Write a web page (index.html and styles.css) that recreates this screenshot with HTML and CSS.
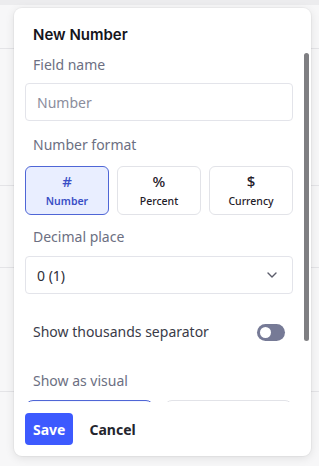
FILE: index.html
```html
<!DOCTYPE html>
<html>
<head>
<meta charset="utf-8">
<link rel="stylesheet" href="styles.css">
</head>
<body>
<div class="card">
  <div class="card-head">
    <h2 class="title">New Number</h2>
  </div>
  <div class="card-body">
    <div class="scroll">
      <div class="label label-first">Field name</div>
      <div class="input"><span class="placeholder">Number</span></div>

      <div class="label label-format">Number format</div>
      <div class="formats">
        <div class="fmt fmt-active">
          <span class="fmt-icon">#</span>
          <span class="fmt-label">Number</span>
        </div>
        <div class="fmt">
          <span class="fmt-icon">%</span>
          <span class="fmt-label">Percent</span>
        </div>
        <div class="fmt">
          <span class="fmt-icon">$</span>
          <span class="fmt-label">Currency</span>
        </div>
      </div>

      <div class="label label-decimal">Decimal place</div>
      <div class="select">
        <span class="select-value">0 (1)</span>
        <svg class="chevron" width="10" height="6" viewBox="0 0 10 6"><path d="M1 1l4 4 4-4" fill="none" stroke="#5b5d6b" stroke-width="1.4" stroke-linecap="round" stroke-linejoin="round"/></svg>
      </div>

      <div class="switch-row">
        <span class="switch-text">Show thousands separator</span>
        <span class="toggle"><span class="knob"></span></span>
      </div>

      <div class="label label-visual">Show as visual</div>
      <div class="visuals">
        <div class="visual visual-active"></div>
        <div class="visual"></div>
      </div>
    </div>
    <div class="scrollbar"></div>
  </div>
  <div class="card-foot">
    <button class="btn-save">Save</button>
    <button class="btn-cancel">Cancel</button>
  </div>
</div>
</body>
</html>
```

FILE: styles.css
```css
html, body {
  height: 100%;
}
body {
  margin: 0;
  padding: 8px 8px 0 14px;
  box-sizing: border-box;
  font-family: "Noto Sans", "Open Sans", sans-serif;
  background:
    linear-gradient(#ececee, #ececee) 0 0 / 100% 5px no-repeat,
    linear-gradient(#e4e4e7, #e4e4e7) 0 48px / 100% 1px no-repeat,
    linear-gradient(#e4e4e7, #e4e4e7) 0 185px / 100% 1px no-repeat,
    linear-gradient(#e4e4e7, #e4e4e7) 0 267px / 100% 1px no-repeat,
    linear-gradient(#e4e4e7, #e4e4e7) 0 391px / 100% 1px no-repeat,
    #f7f7f8;
}
.card {
  width: 297px;
  height: 448px;
  background: #fff;
  border-radius: 8px;
  box-shadow: 0 2px 10px rgba(0, 0, 0, 0.10), 0 0 0 1px rgba(0, 0, 0, 0.03);
  display: flex;
  flex-direction: column;
  overflow: hidden;
}
.card-head {
  padding: 17px 19px 3px;
}
.title {
  margin: 0;
  font-family: Inter, "Noto Sans", sans-serif;
  font-size: 15px;
  font-weight: 600;
  line-height: 20px;
  color: #15151c;
}
.card-body {
  position: relative;
  height: 354px;
  overflow: hidden;
}
.scroll {
  padding: 7px 18px 0 11px;
  display: flex;
  flex-direction: column;
}
.label {
  padding-left: 8px;
  font-size: 14px;
  line-height: 20px;
  color: #6c6f82;
}
.label-format { margin-top: 14px; }
.label-decimal { margin-top: 12px; }
.label-visual { margin-top: 29px; }
.input, .select {
  box-sizing: border-box;
  height: 38px;
  border: 1px solid #e3e4ea;
  border-radius: 4px;
  display: flex;
  align-items: center;
  padding: 0 15px 0 11px;
  font-size: 14px;
}
.input { margin-top: 8px; }
.placeholder { color: #8b8d9c; }
.select {
  margin-top: 9px;
  justify-content: space-between;
}
.select-value { color: #2d2e38; }
.formats {
  margin-top: 11px;
  display: grid;
  grid-template-columns: repeat(3, 1fr);
  gap: 8px;
}
.fmt {
  box-sizing: border-box;
  height: 49px;
  border: 1px solid #e2e3e8;
  border-radius: 6px;
  padding: 5px 0 6px;
  display: flex;
  flex-direction: column;
  align-items: center;
  color: #1f2029;
}
.fmt-active {
  background: #e9eeff;
  border-color: #4f66d6;
  color: #3a4fc6;
}
.fmt-icon {
  font-size: 15px;
  font-weight: 500;
  line-height: 18px;
}
.fmt-label {
  margin-top: 4px;
  font-size: 10.5px;
  font-weight: 500;
  line-height: 14px;
}
.fmt-active .fmt-label { font-weight: 600; }
.switch-row {
  margin-top: 28px;
  padding: 0 8px;
  display: flex;
  align-items: center;
  justify-content: space-between;
  height: 20px;
}
.switch-text {
  font-size: 14px;
  line-height: 20px;
  color: #3a3b48;
}
.toggle {
  width: 28px;
  height: 17px;
  border-radius: 9px;
  background: #767a96;
  display: flex;
  align-items: center;
  padding-left: 3px;
  box-sizing: border-box;
}
.knob {
  width: 11px;
  height: 11px;
  border-radius: 50%;
  background: #fff;
}
.visuals {
  margin-top: 9px;
  display: grid;
  grid-template-columns: 1fr 1fr;
  gap: 10px;
}
.visual {
  height: 70px;
  border: 1px solid #e2e3e8;
  border-radius: 8px;
}
.visual-active {
  border-color: #4f66d6;
  background: #f3f5ff;
}
.scrollbar {
  position: absolute;
  top: 5px;
  right: 2px;
  width: 5px;
  height: 288px;
  border-radius: 3px;
  background: #7f7f82;
}
.card-foot {
  padding: 11px 11px;
  display: flex;
  align-items: center;
  gap: 16px;
}
.btn-save, .btn-cancel {
  font-family: "Noto Sans", "Open Sans", sans-serif;
  font-size: 14px;
  font-weight: 700;
  border: 0;
  height: 32px;
  border-radius: 4px;
  padding: 0 8px;
  cursor: pointer;
}
.btn-save {
  background: #3d5afe;
  color: #fff;
}
.btn-cancel {
  background: transparent;
  color: #24252e;
  padding: 0;
}
```
